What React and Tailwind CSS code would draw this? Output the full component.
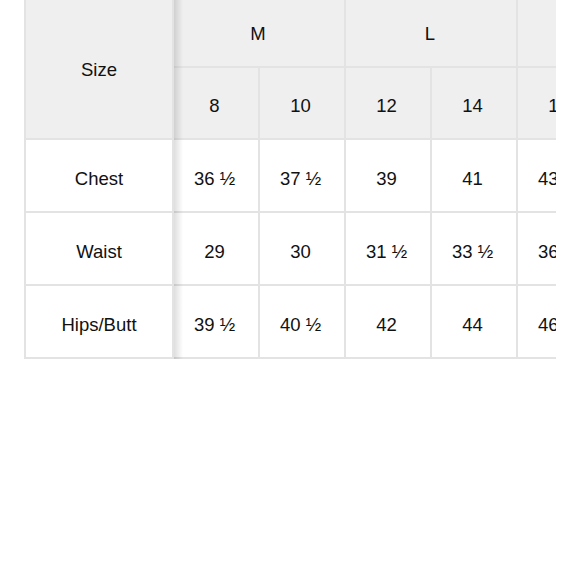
import React from "react";

const rows = [
  ["Chest", ["36 ½", "37 ½", "39", "41", "43 ½", "45 ½"]],
  ["Waist", ["29", "30", "31 ½", "33 ½", "36 ½", "38 ½"]],
  ["Hips/Butt", ["39 ½", "40 ½", "42", "44", "46 ½", "48 ½"]],
];

export default function App() {
  return (
    <div className="w-[580px] h-[580px] bg-white overflow-hidden" style={{ fontFamily: '"Liberation Sans", Arial, sans-serif' }}>
      <div className="relative ml-[24px] -mt-[2px] w-[532px] overflow-hidden">
        <div className="w-max bg-[#e3e3e3] p-[2px] grid gap-[2px] grid-cols-[146px_84px_84px_84px_84px_84px_84px] grid-rows-[66px_70px_71px_71px_71px] text-[18.5px] text-[#111]">
          <div className="row-span-2 bg-[#efefef] flex items-center justify-center pt-[2px]">Size</div>
          <div className="col-span-2 bg-[#efefef] flex items-center justify-center pt-[2px] pr-[2px]">M</div>
          <div className="col-span-2 bg-[#efefef] flex items-center justify-center pt-[2px] pr-[2px]">L</div>
          <div className="col-span-2 bg-[#efefef] flex items-center justify-center pt-[2px] pr-[2px]">XL</div>
          {["8", "10", "12", "14", "16", "18"].map((s) => (
            <div key={s} className="bg-[#efefef] flex items-center justify-center pt-[6px] pr-[3px]">{s}</div>
          ))}
          {rows.map(([label, vals]) => (
            <React.Fragment key={label}>
              <div className="bg-white flex items-center justify-center pt-[6px]">{label}</div>
              {vals.map((v, i) => (
                <div key={i} className="bg-white flex items-center justify-center pt-[6px] pr-[3px]">{v}</div>
              ))}
            </React.Fragment>
          ))}
        </div>
        <div className="absolute top-0 bottom-0 left-[150px] w-[9px] bg-gradient-to-r from-black/[0.13] to-transparent" />
      </div>
    </div>
  );
}
